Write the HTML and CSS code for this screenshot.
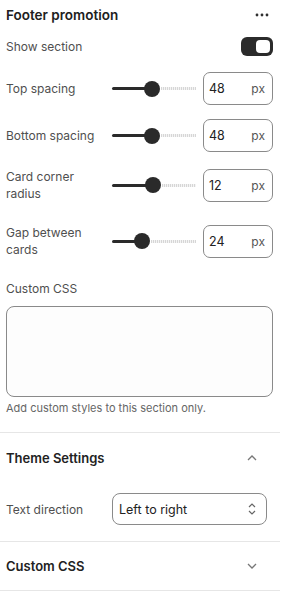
FILE: index.html
```html
<!DOCTYPE html>
<html>
<head>
<meta charset="utf-8">
<link rel="stylesheet" href="styles.css">
</head>
<body>
<div class="panel">
  <div class="section">
    <div class="head">
      <span class="title">Footer promotion</span>
      <svg class="more" width="14" height="4" viewBox="0 0 14 4"><circle cx="2" cy="2" r="1.4"/><circle cx="7" cy="2" r="1.4"/><circle cx="12" cy="2" r="1.4"/></svg>
    </div>
    <div class="toggle-row">
      <span class="label">Show section</span>
      <span class="toggle"><span class="knob"></span></span>
    </div>
    <div class="range-row r1">
      <span class="label">Top spacing</span>
      <div class="slider"><span class="fill" style="width:36px"></span><span class="thumb"></span><span class="rest"></span></div>
      <div class="num"><span>48</span><span class="unit">px</span></div>
    </div>
    <div class="range-row r2">
      <span class="label">Bottom spacing</span>
      <div class="slider"><span class="fill" style="width:36px"></span><span class="thumb"></span><span class="rest"></span></div>
      <div class="num"><span>48</span><span class="unit">px</span></div>
    </div>
    <div class="range-row r3">
      <span class="label">Card corner radius</span>
      <div class="slider"><span class="fill" style="width:37px"></span><span class="thumb"></span><span class="rest"></span></div>
      <div class="num"><span>12</span><span class="unit">px</span></div>
    </div>
    <div class="range-row r4">
      <span class="label">Gap between cards</span>
      <div class="slider"><span class="fill" style="width:26px"></span><span class="thumb"></span><span class="rest"></span></div>
      <div class="num"><span>24</span><span class="unit">px</span></div>
    </div>
    <div class="css-block">
      <span class="label">Custom CSS</span>
      <div class="textarea"></div>
      <span class="hint">Add custom styles to this section only.</span>
    </div>
  </div>
  <div class="group">
    <div class="group-head open">
      <span class="gtitle">Theme Settings</span>
      <svg class="chev" width="12" height="8" viewBox="0 0 12 8"><path d="M2 6 L6 2 L10 6"/></svg>
    </div>
    <div class="select-row">
      <span class="label">Text direction</span>
      <div class="select">
        <span>Left to right</span>
        <svg class="updown" width="10" height="14" viewBox="0 0 10 14"><path d="M2 5 L5 2 L8 5 M2 9 L5 12 L8 9"/></svg>
      </div>
    </div>
  </div>
  <div class="group closed">
    <div class="group-head">
      <span class="gtitle">Custom CSS</span>
      <svg class="chev" width="12" height="8" viewBox="0 0 12 8"><path d="M2 2 L6 6 L10 2"/></svg>
    </div>
  </div>
</div>
</body>
</html>
```

FILE: styles.css
```css
* { box-sizing: border-box; }
html, body { margin: 0; background: #fff; }
body {
  font-family: Inter, "Noto Sans", sans-serif;
  color: #4a4a4a;
  font-size: 12px;
}
.panel { width: 280px; }
.section { padding: 0 7px 0 6px; }
.head {
  display: flex; align-items: center; justify-content: space-between;
  height: 30px;
}
.title { font-size: 13.5px; font-weight: 600; color: #202020; }
.more { fill: #303030; margin-right: 4px; }
.toggle-row {
  display: flex; align-items: center; justify-content: space-between;
  height: 33px;
}
.label { color: #4f4f4f; font-size: 12px; line-height: 17px; }
.toggle {
  width: 32px; height: 19px; border-radius: 6px; background: #2b2b2b;
  display: flex; align-items: center; justify-content: flex-end; padding-right: 3px;
}
.knob { width: 14px; height: 13px; background: #fff; border-radius: 4px; }
.range-row {
  display: grid; grid-template-columns: 106px 91px 70px;
  align-items: center; height: 33px;
}
.range-row .label { width: 98px; }
.r1 { margin-top: 9px; }
.r2 { margin-top: 14px; }
.r3 { margin-top: 16px; }
.r4 { margin-top: 23px; }
.slider { display: flex; align-items: center; height: 16px; padding-right: 7px; }
.fill { height: 3px; background: #2a2a2a; border-radius: 2px 0 0 2px; flex: none; }
.thumb { width: 16px; height: 16px; border-radius: 50%; background: #2a2a2a; margin-left: -4px; flex: none; }
.rest {
  flex: 1; height: 3px; margin-left: 1px;
  background: repeating-linear-gradient(90deg, #d6d6d6 0 1px, #f4f4f4 1px 2px);
}
.num {
  height: 33px; border: 1px solid #8a8a8a; border-radius: 7px;
  display: flex; align-items: center; justify-content: space-between;
  padding: 0 7px 0 5px; color: #222; font-size: 12.5px;
}
.unit { color: #555; font-size: 12px; }
.css-block { display: flex; flex-direction: column; padding-top: 23px; padding-bottom: 17px; }
.textarea {
  margin-top: 9px; height: 91px; border: 1px solid #8a8a8a; border-radius: 8px; background: #fdfdfd;
}
.hint { margin-top: 4px; font-size: 11px; color: #666; line-height: 14px; }
.group { border-top: 1px solid #e6e6e6; }
.group.closed { border-bottom: 1px solid #e6e6e6; }
.group-head {
  display: flex; align-items: center; justify-content: space-between;
  height: 48px; padding: 0 22px 0 6px;
}
.group-head.open { height: 50px; }
.gtitle { font-size: 13px; font-weight: 600; color: #222; }
.chev { fill: none; stroke: #777; stroke-width: 1.3; }
.select-row {
  display: flex; align-items: center; padding: 10px 0 16px 6px;
}
.select-row .label { width: 106px; }
.select {
  width: 155px; height: 32px; border: 1px solid #8a8a8a; border-radius: 8px;
  display: flex; align-items: center; justify-content: space-between;
  padding: 0 9px 0 6px; color: #222; font-size: 12.5px;
}
.updown { fill: none; stroke: #666; stroke-width: 1.2; }
```
